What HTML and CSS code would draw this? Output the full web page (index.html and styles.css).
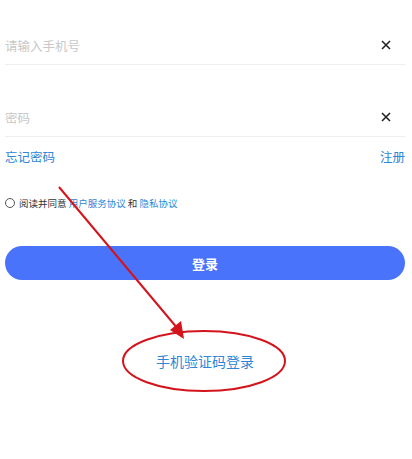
FILE: index.html
```html
<!DOCTYPE html>
<html lang="zh-CN">
<head>
  <meta charset="UTF-8" />
  <meta name="viewport" content="width=device-width, initial-scale=1.0" />
  <title>登录</title>
  <link rel="stylesheet" href="styles.css">
</head>
<body>
  <main class="login">
    <div class="field">
      <span class="placeholder">请输入手机号</span>
      <svg class="clear" width="10" height="10" viewBox="0 0 10 10"><path d="M1 1L9 9M9 1L1 9" /></svg>
    </div>
    <div class="field field-pwd">
      <span class="placeholder">密码</span>
      <svg class="clear" width="10" height="10" viewBox="0 0 10 10"><path d="M1 1L9 9M9 1L1 9" /></svg>
    </div>

    <div class="links">
      <a class="link">忘记密码</a>
      <a class="link">注册</a>
    </div>

    <div class="agree">
      <span class="radio"></span>
      <span>阅读并同意 <a class="link">用户服务协议</a> 和 <a class="link">隐私协议</a></span>
    </div>

    <button class="submit">登录</button>

    <div class="sms">
      <a class="link">手机验证码登录</a>
    </div>
  </main>

  <!-- red annotation drawn over the page -->
  <svg class="mark" viewBox="0 0 412 459">
    <line x1="59" y1="187" x2="178" y2="329" />
    <polygon points="184,339 170,330 181,321" />
    <ellipse cx="204" cy="361" rx="81" ry="30" />
  </svg>
</body>
</html>
```

FILE: styles.css
```css
body {
  margin: 0;
  padding: 0;
  min-height: 459px;
  background: #fff;
  font-family: "Noto Sans CJK SC", "Noto Sans", sans-serif;
  position: relative;
}
.login {
  padding: 26px 7px 0 5px;
}
.field {
  height: 38px;
  border-bottom: 1px solid #eeeeee;
  display: flex;
  align-items: center;
  justify-content: space-between;
}
.field-pwd {
  margin-top: 33px;
}
.placeholder {
  font-size: 12.5px;
  color: #c8c8c8;
}
.clear {
  margin-right: 14px;
  fill: none;
  stroke: #222;
  stroke-width: 1.6;
}
.link {
  color: #2d86d6;
}
.links {
  margin-top: 9px;
  height: 20px;
  display: flex;
  align-items: center;
  justify-content: space-between;
  font-size: 12.5px;
}
.agree {
  margin-top: 30px;
  height: 14px;
  display: flex;
  align-items: center;
  font-size: 9.5px;
  color: #333;
}
.radio {
  width: 8px;
  height: 8px;
  border: 1px solid #555;
  border-radius: 50%;
  margin-right: 4px;
}
.submit {
  display: block;
  width: 100%;
  margin-top: 36px;
  height: 34px;
  border: none;
  border-radius: 17px;
  background: #4a73fb;
  color: #fff;
  font-family: inherit;
  font-size: 13px;
  font-weight: bold;
}
.sms {
  margin-top: 71px;
  height: 20px;
  display: flex;
  align-items: center;
  justify-content: center;
  font-size: 14px;
}
.mark {
  position: absolute;
  left: 0;
  top: 0;
  width: 412px;
  height: 459px;
  overflow: visible;
  pointer-events: none;
}
.mark line, .mark ellipse {
  stroke: #d4141c;
  stroke-width: 2;
  fill: none;
}
.mark polygon {
  fill: #d4141c;
}
```
